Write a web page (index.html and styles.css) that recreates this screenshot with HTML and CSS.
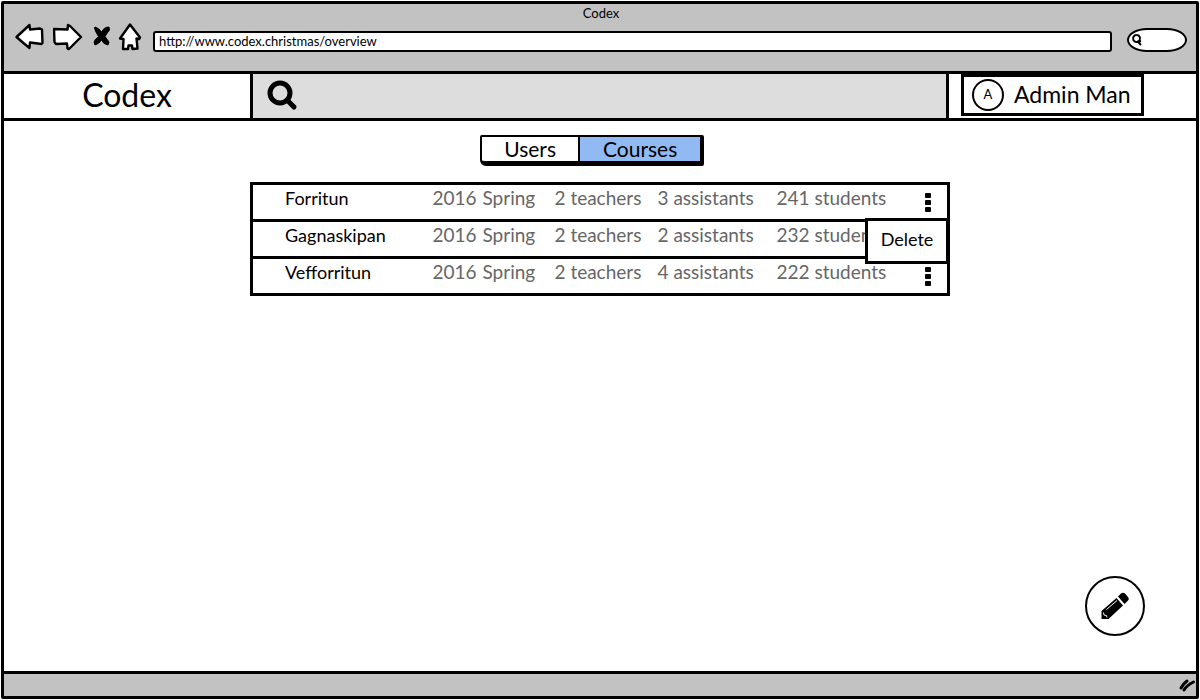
FILE: index.html
```html
<!DOCTYPE html>
<html lang="en">
<head>
<meta charset="utf-8">
<title>Codex</title>
<link rel="stylesheet" href="styles.css">
</head>
<body>
<div class="window">
  <header class="chrome">
    <div class="chrome-title">Codex</div>
    <div class="toolbar">
      <div class="nav">
        <button class="nav-button" type="button" aria-label="Back"><svg width="30" height="30" viewBox="0 0 30 30"><path d="M1.500 15 L14.500 3 L15 7.500 L25 6.500 L27 7.500 L27.500 21 L26.500 22 L15 20.500 L14.500 26 L9 21.500 Z"/></svg></button>
        <button class="nav-button" type="button" aria-label="Forward"><svg width="30" height="30" viewBox="0 0 30 30"><path d="M1 7 L14.500 7.500 L15 3 L17 4 L28 15 L16 27 L14.500 26.500 L14 21.500 L3 22 L1.500 20 Z"/></svg></button>
        <button class="nav-button stop" type="button" aria-label="Stop"><svg width="20" height="30" viewBox="0 0 20 30"><path class="ink" d="M4 5 Q8 6 10.500 10 Q13 5 18 5 L18.500 8 Q16 11 14 14.500 L18 20 L17 23 Q12 22 10.500 18 Q8 22 4 23 L3 20 Q4 17 7.500 14.500 Q4 9 3.500 6 Z"/></svg></button>
        <button class="nav-button" type="button" aria-label="Home"><svg width="24" height="30" viewBox="0 0 24 30"><path d="M12 2.500 L22 15.500 L21 17 L18.500 16.500 L19.500 26.500 L14.500 27 L14 23.500 L10.500 23.500 L10 27 L5 27 L5.500 17 L2 16.500 Z"/></svg></button>
      </div>
      <input class="address" type="text" aria-label="Address" value="http://www.codex.christmas/overview">
      <label class="web-search">
        <svg width="12" height="14" viewBox="0 0 12 14" aria-hidden="true"><path d="M5.500 2 A3.500 3.500 0 1 0 5.600 2 M6 8 L10 12 M7 9 L10 8"/></svg>
        <input class="web-search-input" type="text" aria-label="Web search">
      </label>
    </div>
  </header>

  <div class="app-bar">
    <h1 class="brand">Codex</h1>
    <label class="app-search">
      <svg width="32" height="32" viewBox="0 0 32 32" aria-hidden="true"><circle cx="13" cy="13" r="10"/><path d="M20.500 20.500 L27 27"/></svg>
      <input class="app-search-input" type="text" aria-label="Search">
    </label>
    <div class="account">
      <button class="account-button" type="button"><span class="avatar">A</span><span class="account-name">Admin Man</span></button>
    </div>
  </div>

  <main class="content">
    <div class="tab-row">
      <div class="tabs">
        <button class="tab" type="button">Users</button>
        <button class="tab selected" type="button" aria-pressed="true">Courses</button>
      </div>
    </div>

    <table class="courses">
      <tbody>
        <tr>
          <th class="name" scope="row">Forritun</th>
          <td class="year">2016</td><td class="term">Spring</td>
          <td class="teachers">2 teachers</td><td class="assistants">3 assistants</td><td class="students">241 students</td>
          <td class="actions">
            <button class="more" type="button" aria-label="More actions for Forritun"><svg width="6" height="20" viewBox="0 0 6 20"><rect width="6" height="5" rx="1"/><rect y="7" width="6" height="5" rx="1"/><rect y="14" width="6" height="5" rx="1"/></svg></button>
            <div class="menu"><button class="menu-item" type="button">Delete</button></div>
          </td>
        </tr>
        <tr>
          <th class="name" scope="row">Gagnaskipan</th>
          <td class="year">2016</td><td class="term">Spring</td>
          <td class="teachers">2 teachers</td><td class="assistants">2 assistants</td><td class="students">232 students</td>
          <td class="actions"></td>
        </tr>
        <tr>
          <th class="name" scope="row">Vefforritun</th>
          <td class="year">2016</td><td class="term">Spring</td>
          <td class="teachers">2 teachers</td><td class="assistants">4 assistants</td><td class="students">222 students</td>
          <td class="actions">
            <button class="more" type="button" aria-label="More actions for Vefforritun"><svg width="6" height="20" viewBox="0 0 6 20"><rect width="6" height="5" rx="1"/><rect y="7" width="6" height="5" rx="1"/><rect y="14" width="6" height="5" rx="1"/></svg></button>
          </td>
        </tr>
      </tbody>
    </table>

    <button class="compose" type="button" aria-label="Edit"><svg width="28" height="28" viewBox="0 0 28 28"><path d="M0.500 19 L15.500 6 L22 13.500 L7.500 27 L0.500 27 Z M17 4.500 L20 1.500 Q22 0 24 1.500 L27 5 Q28.500 7 27 8.500 L23.500 12 Z"/><path class="shine" d="M5.500 17.500 L16 8.500"/><path class="shine" d="M2.500 20.500 L3 23 L5.500 23.500 L6 25.500"/></svg></button>
  </main>

  <footer class="status">
    <svg width="18" height="16" viewBox="0 0 18 16" aria-hidden="true"><path d="M3 11 Q5 7 9 4 M6 13 Q9 8 15.500 5"/></svg>
  </footer>
</div>
</body>
</html>
```
FILE: styles.css
```css
* {
  box-sizing: border-box;
}

body {
  margin: 0;
  padding: 1px;
  height: 100vh;
  background: #fff;
  color: #000;
  font-family: Lato, "Noto Sans", sans-serif;
}

button,
input {
  margin: 0;
  padding: 0;
  border: 0;
  background: none;
  color: inherit;
  font: inherit;
}

.window {
  display: flex;
  flex-direction: column;
  height: 100%;
  border: 3px solid #000;
  border-radius: 2px;
}

.chrome {
  padding: 0 9px 19px 11px;
  background: #c2c2c2;
}

.chrome-title {
  font-size: 13px;
  line-height: 18px;
  text-align: center;
}

.toolbar {
  display: flex;
  align-items: flex-end;
}

.nav {
  display: flex;
  gap: 8px;
  margin-right: 11px;
}

.nav-button {
  display: flex;
}

.nav-button.stop {
  margin-right: -1px;
}

.nav-button svg {
  fill: #fff;
  stroke: #000;
  stroke-width: 2.400;
  stroke-linejoin: round;
}

.nav-button .ink {
  fill: #000;
  stroke-width: 1;
}

.address {
  flex: 1;
  min-width: 0;
  height: 21px;
  padding: 0 4px 2px;
  border: 2px solid #000;
  border-radius: 3px;
  background: #fff;
  font-size: 13px;
}

.web-search {
  display: flex;
  align-items: center;
  width: 60px;
  height: 24px;
  margin-left: 15px;
  padding-left: 2px;
  border: 2px solid #000;
  border-radius: 20px / 12px;
  background: #fff;
}

.web-search svg {
  flex: none;
  fill: none;
  stroke: #000;
  stroke-width: 2;
}

.web-search-input {
  min-width: 0;
  width: 100%;
}

.app-bar {
  display: flex;
  height: 50px;
  border-top: 3px solid #000;
  border-bottom: 3px solid #000;
}

.brand {
  width: 246px;
  margin: 0;
  font-size: 32px;
  font-weight: 400;
  line-height: 42px;
  text-align: center;
}

.app-search {
  display: flex;
  flex: 1;
  align-items: center;
  padding: 0 14px;
  border-right: 3px solid #000;
  border-left: 3px solid #000;
  background: #ddd;
}

.app-search svg {
  flex: none;
  fill: none;
  stroke: #000;
  stroke-width: 5;
  stroke-linecap: round;
}

.app-search-input {
  flex: 1;
  min-width: 0;
  font-size: 20px;
}

.account {
  width: 247px;
  padding-left: 12px;
}

.account-button {
  display: flex;
  align-items: center;
  gap: 10px;
  height: 42px;
  padding: 0 10px 0 8px;
  border: 3px solid #000;
  font-size: 23px;
}

.account-name {
  padding-bottom: 3px;
}

.avatar {
  width: 32px;
  height: 32px;
  border: 2px solid #000;
  border-radius: 50%;
  font-size: 13px;
  line-height: 26px;
  text-align: center;
}

.content {
  position: relative;
  flex: 1;
  padding-top: 14px;
}

.tab-row {
  display: flex;
  justify-content: center;
  padding: 0 16px 16px 0;
}

.tabs {
  display: flex;
  width: 224px;
  border: 2px solid #000;
  border-right-width: 4px;
  border-bottom-width: 5px;
  border-radius: 2px 2px 2px 6px;
}

.tab {
  flex: 98;
  height: 24px;
  font-size: 21px;
  line-height: 24px;
}

.tab.selected {
  flex: 122;
  border-left: 2px solid #000;
  background: #92baf2;
}

.courses {
  width: 700px;
  max-width: 100%;
  margin: 0 auto;
  border: 3px solid #000;
  border-collapse: collapse;
  table-layout: fixed;
  color: #666;
  font-size: 19px;
  line-height: 22px;
}

.courses tr {
  height: 37px;
  border-bottom: 3px solid #000;
}

.courses th,
.courses td {
  padding: 0 0 8px;
  font-weight: 400;
  text-align: left;
  white-space: nowrap;
}

.courses .name {
  width: 181px;
  padding-left: 32px;
  color: #000;
  font-size: 18px;
}

.year {
  width: 50px;
}

.term {
  width: 72px;
}

.teachers {
  width: 103px;
}

.assistants {
  width: 119px;
}

.courses .actions {
  position: relative;
  width: 40px;
  padding: 0 16px 2px 0;
  text-align: right;
}

.more {
  vertical-align: middle;
}

.more svg {
  display: block;
}

.menu {
  position: absolute;
  z-index: 1;
  top: 100%;
  right: 0;
  width: 84px;
  margin: -1px -2px 0 0;
  border: 3px solid #000;
  background: #fff;
  color: #000;
}

.menu-item {
  width: 100%;
  height: 40px;
  padding-bottom: 5px;
  font-size: 18px;
}

.compose {
  position: absolute;
  right: 51px;
  bottom: 35px;
  display: flex;
  align-items: center;
  justify-content: center;
  width: 60px;
  height: 60px;
  border: 2px solid #000;
  border-radius: 50%;
  background: #fff;
}

.compose svg {
  flex: none;
}

.compose .shine {
  fill: none;
  stroke: #fff;
  stroke-width: 1;
}

.status {
  display: flex;
  align-items: center;
  justify-content: flex-end;
  height: 25px;
  border-top: 3px solid #000;
  background: #c2c2c2;
}

.status svg {
  fill: none;
  stroke: #000;
  stroke-width: 3;
  stroke-linecap: round;
}
```
